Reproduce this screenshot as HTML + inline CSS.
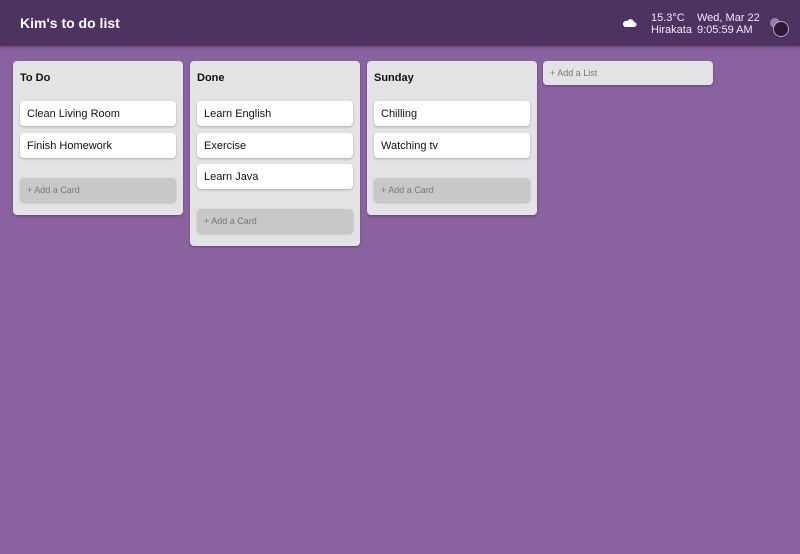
<!DOCTYPE html>
<html><head><style>
*{box-sizing:border-box;margin:0;padding:0}
body{width:800px;height:554px;background:#8a62a0;font-family:"Liberation Sans",sans-serif;position:relative;overflow:hidden}
.hdr{position:absolute;left:0;top:0;width:800px;height:46px;background:#4e3262;box-shadow:0 1px 3px rgba(0,0,0,.3)}
.title{position:absolute;left:20px;top:15px;color:#fff;font-size:14px;font-weight:bold}
.w{position:absolute;color:#f2eaf5;font-size:11px;line-height:12px}
.list{position:absolute;top:61px;width:170px;background:#e3e3e5;border-radius:4px;box-shadow:0 1px 2px rgba(0,0,0,.3)}
.lt{position:absolute;left:7px;top:11px;font-size:11px;font-weight:bold;color:#111}
.card{position:absolute;left:7px;width:156px;height:25px;background:#fff;border-radius:4px;box-shadow:0 1px 2px rgba(0,0,0,.25);font-size:11px;color:#111;padding:8px 7px 0;line-height:11px}
.add{position:absolute;left:7px;width:156px;height:24px;background:#c8c8c8;border-radius:4px;box-shadow:0 1px 2px rgba(0,0,0,.2);font-size:9px;color:#777;padding:7px 7px;line-height:10px}
</style></head><body>
<div class="hdr">
<div class="title">Kim's to do list</div>
<svg style="position:absolute;left:623px;top:18px" width="14" height="10" viewBox="0 0 14 10"><path d="M2 9h9a2.5 2.5 0 0 0 0-5 3.5 3.5 0 0 0-6.5-1A3 3 0 0 0 2 9z" fill="#fff"/></svg>
<div class="w" style="left:651px;top:12px">15.3°C<br>Hirakata</div>
<div class="w" style="left:697px;top:12px">Wed, Mar 22<br>9:05:59 AM</div>
<div style="position:absolute;left:770px;top:18px;width:10px;height:10px;border-radius:50%;background:#9a7ab0"></div>
<div style="position:absolute;left:773px;top:21px;width:16px;height:16px;border-radius:50%;background:#2a1a33;border:1.5px solid #b9a2c8"></div>
</div>
<div class="list" style="left:13px;height:154px"><div class="lt">To Do</div>
<div class="card" style="top:40px">Clean Living Room</div>
<div class="card" style="top:72px">Finish Homework</div>
<div class="add" style="top:117px">+ Add a Card</div></div>
<div class="list" style="left:190px;height:185px"><div class="lt">Done</div>
<div class="card" style="top:40px">Learn English</div>
<div class="card" style="top:72px">Exercise</div>
<div class="card" style="top:103px">Learn Java</div>
<div class="add" style="top:148px">+ Add a Card</div></div>
<div class="list" style="left:367px;height:154px"><div class="lt">Sunday</div>
<div class="card" style="top:40px">Chilling</div>
<div class="card" style="top:72px">Watching tv</div>
<div class="add" style="top:117px">+ Add a Card</div></div>
<div class="list" style="left:543px;height:24px;font-size:9px;color:#777;padding:7px 7px;line-height:10px">+ Add a List</div>
</body></html>
